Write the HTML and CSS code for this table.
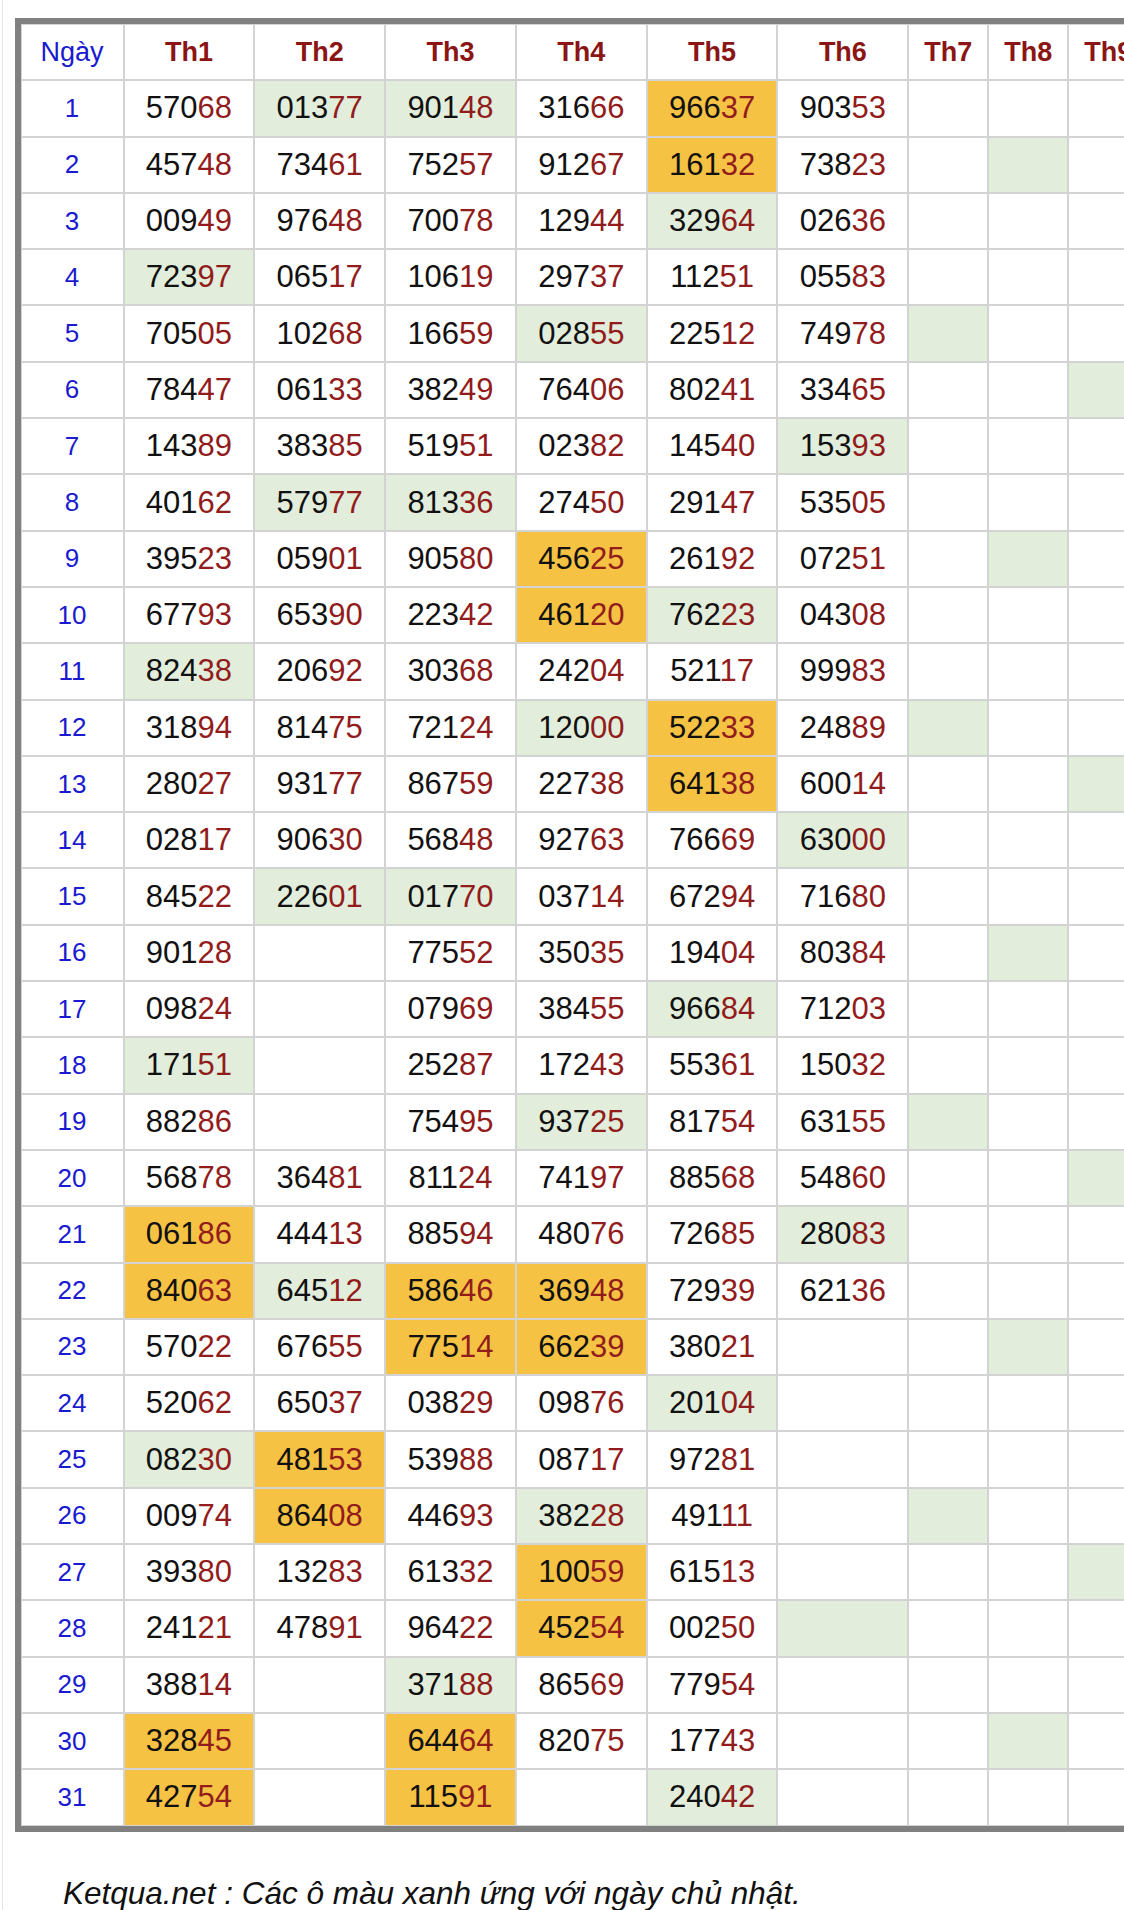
FILE: index.html
```html
<!DOCTYPE html>
<html lang="vi">
<head>
<meta charset="utf-8">
<title>Bảng kết quả theo tháng</title>
<link rel="stylesheet" href="styles.css">
</head>
<body>
<div class="page">
  <div class="scroller">
    <table class="kq">
      <thead>
        <tr>
          <th class="day-col">Ngày</th>
          <th class="m">Th1</th><th class="m">Th2</th><th class="m">Th3</th><th class="m">Th4</th><th class="m">Th5</th><th class="m">Th6</th>
          <th class="s">Th7</th><th class="s">Th8</th><th class="s">Th9</th><th class="s">Th10</th><th class="s">Th11</th><th class="s">Th12</th>
        </tr>
      </thead>
      <tbody>
        <tr><td class="d">1</td><td>570<span class="r">68</span></td><td class="g">013<span class="r">77</span></td><td class="g">901<span class="r">48</span></td><td>316<span class="r">66</span></td><td class="o">966<span class="r">37</span></td><td>903<span class="r">53</span></td><td></td><td></td><td></td><td class="g"></td><td class="g"></td><td></td></tr>
        <tr><td class="d">2</td><td>457<span class="r">48</span></td><td>734<span class="r">61</span></td><td>752<span class="r">57</span></td><td>912<span class="r">67</span></td><td class="o">161<span class="r">32</span></td><td>738<span class="r">23</span></td><td></td><td class="g"></td><td></td><td></td><td></td><td></td></tr>
        <tr><td class="d">3</td><td>009<span class="r">49</span></td><td>976<span class="r">48</span></td><td>700<span class="r">78</span></td><td>129<span class="r">44</span></td><td class="g">329<span class="r">64</span></td><td>026<span class="r">36</span></td><td></td><td></td><td></td><td></td><td></td><td></td></tr>
        <tr><td class="d">4</td><td class="g">723<span class="r">97</span></td><td>065<span class="r">17</span></td><td>106<span class="r">19</span></td><td>297<span class="r">37</span></td><td>112<span class="r">51</span></td><td>055<span class="r">83</span></td><td></td><td></td><td></td><td class="g"></td><td></td><td></td></tr>
        <tr><td class="d">5</td><td>705<span class="r">05</span></td><td>102<span class="r">68</span></td><td>166<span class="r">59</span></td><td class="g">028<span class="r">55</span></td><td>225<span class="r">12</span></td><td>749<span class="r">78</span></td><td class="g"></td><td></td><td></td><td></td><td></td><td></td></tr>
        <tr><td class="d">6</td><td>784<span class="r">47</span></td><td>061<span class="r">33</span></td><td>382<span class="r">49</span></td><td>764<span class="r">06</span></td><td>802<span class="r">41</span></td><td>334<span class="r">65</span></td><td></td><td></td><td class="g"></td><td></td><td></td><td class="g"></td></tr>
        <tr><td class="d">7</td><td>143<span class="r">89</span></td><td>383<span class="r">85</span></td><td>519<span class="r">51</span></td><td>023<span class="r">82</span></td><td>145<span class="r">40</span></td><td class="g">153<span class="r">93</span></td><td></td><td></td><td></td><td></td><td></td><td></td></tr>
        <tr><td class="d">8</td><td>401<span class="r">62</span></td><td class="g">579<span class="r">77</span></td><td class="g">813<span class="r">36</span></td><td>274<span class="r">50</span></td><td>291<span class="r">47</span></td><td>535<span class="r">05</span></td><td></td><td></td><td></td><td></td><td class="g"></td><td></td></tr>
        <tr><td class="d">9</td><td>395<span class="r">23</span></td><td>059<span class="r">01</span></td><td>905<span class="r">80</span></td><td class="o">456<span class="r">25</span></td><td>261<span class="r">92</span></td><td>072<span class="r">51</span></td><td></td><td class="g"></td><td></td><td></td><td></td><td></td></tr>
        <tr><td class="d">10</td><td>677<span class="r">93</span></td><td>653<span class="r">90</span></td><td>223<span class="r">42</span></td><td class="o">461<span class="r">20</span></td><td class="g">762<span class="r">23</span></td><td>043<span class="r">08</span></td><td></td><td></td><td></td><td></td><td></td><td></td></tr>
        <tr><td class="d">11</td><td class="g">824<span class="r">38</span></td><td>206<span class="r">92</span></td><td>303<span class="r">68</span></td><td>242<span class="r">04</span></td><td>521<span class="r">17</span></td><td>999<span class="r">83</span></td><td></td><td></td><td></td><td class="g"></td><td></td><td></td></tr>
        <tr><td class="d">12</td><td>318<span class="r">94</span></td><td>814<span class="r">75</span></td><td>721<span class="r">24</span></td><td class="g">120<span class="r">00</span></td><td class="o">522<span class="r">33</span></td><td>248<span class="r">89</span></td><td class="g"></td><td></td><td></td><td></td><td></td><td></td></tr>
        <tr><td class="d">13</td><td>280<span class="r">27</span></td><td>931<span class="r">77</span></td><td>867<span class="r">59</span></td><td>227<span class="r">38</span></td><td class="o">641<span class="r">38</span></td><td>600<span class="r">14</span></td><td></td><td></td><td class="g"></td><td></td><td></td><td class="g"></td></tr>
        <tr><td class="d">14</td><td>028<span class="r">17</span></td><td>906<span class="r">30</span></td><td>568<span class="r">48</span></td><td>927<span class="r">63</span></td><td>766<span class="r">69</span></td><td class="g">630<span class="r">00</span></td><td></td><td></td><td></td><td></td><td></td><td></td></tr>
        <tr><td class="d">15</td><td>845<span class="r">22</span></td><td class="g">226<span class="r">01</span></td><td class="g">017<span class="r">70</span></td><td>037<span class="r">14</span></td><td>672<span class="r">94</span></td><td>716<span class="r">80</span></td><td></td><td></td><td></td><td></td><td class="g"></td><td></td></tr>
        <tr><td class="d">16</td><td>901<span class="r">28</span></td><td></td><td>775<span class="r">52</span></td><td>350<span class="r">35</span></td><td>194<span class="r">04</span></td><td>803<span class="r">84</span></td><td></td><td class="g"></td><td></td><td></td><td></td><td></td></tr>
        <tr><td class="d">17</td><td>098<span class="r">24</span></td><td></td><td>079<span class="r">69</span></td><td>384<span class="r">55</span></td><td class="g">966<span class="r">84</span></td><td>712<span class="r">03</span></td><td></td><td></td><td></td><td></td><td></td><td></td></tr>
        <tr><td class="d">18</td><td class="g">171<span class="r">51</span></td><td></td><td>252<span class="r">87</span></td><td>172<span class="r">43</span></td><td>553<span class="r">61</span></td><td>150<span class="r">32</span></td><td></td><td></td><td></td><td class="g"></td><td></td><td></td></tr>
        <tr><td class="d">19</td><td>882<span class="r">86</span></td><td></td><td>754<span class="r">95</span></td><td class="g">937<span class="r">25</span></td><td>817<span class="r">54</span></td><td>631<span class="r">55</span></td><td class="g"></td><td></td><td></td><td></td><td></td><td></td></tr>
        <tr><td class="d">20</td><td>568<span class="r">78</span></td><td>364<span class="r">81</span></td><td>811<span class="r">24</span></td><td>741<span class="r">97</span></td><td>885<span class="r">68</span></td><td>548<span class="r">60</span></td><td></td><td></td><td class="g"></td><td></td><td></td><td class="g"></td></tr>
        <tr><td class="d">21</td><td class="o">061<span class="r">86</span></td><td>444<span class="r">13</span></td><td>885<span class="r">94</span></td><td>480<span class="r">76</span></td><td>726<span class="r">85</span></td><td class="g">280<span class="r">83</span></td><td></td><td></td><td></td><td></td><td></td><td></td></tr>
        <tr><td class="d">22</td><td class="o">840<span class="r">63</span></td><td class="g">645<span class="r">12</span></td><td class="o">586<span class="r">46</span></td><td class="o">369<span class="r">48</span></td><td>729<span class="r">39</span></td><td>621<span class="r">36</span></td><td></td><td></td><td></td><td></td><td class="g"></td><td></td></tr>
        <tr><td class="d">23</td><td>570<span class="r">22</span></td><td>676<span class="r">55</span></td><td class="o">775<span class="r">14</span></td><td class="o">662<span class="r">39</span></td><td>380<span class="r">21</span></td><td></td><td></td><td class="g"></td><td></td><td></td><td></td><td></td></tr>
        <tr><td class="d">24</td><td>520<span class="r">62</span></td><td>650<span class="r">37</span></td><td>038<span class="r">29</span></td><td>098<span class="r">76</span></td><td class="g">201<span class="r">04</span></td><td></td><td></td><td></td><td></td><td></td><td></td><td></td></tr>
        <tr><td class="d">25</td><td class="g">082<span class="r">30</span></td><td class="o">481<span class="r">53</span></td><td>539<span class="r">88</span></td><td>087<span class="r">17</span></td><td>972<span class="r">81</span></td><td></td><td></td><td></td><td></td><td class="g"></td><td></td><td></td></tr>
        <tr><td class="d">26</td><td>009<span class="r">74</span></td><td class="o">864<span class="r">08</span></td><td>446<span class="r">93</span></td><td class="g">382<span class="r">28</span></td><td>491<span class="r">11</span></td><td></td><td class="g"></td><td></td><td></td><td></td><td></td><td></td></tr>
        <tr><td class="d">27</td><td>393<span class="r">80</span></td><td>132<span class="r">83</span></td><td>613<span class="r">32</span></td><td class="o">100<span class="r">59</span></td><td>615<span class="r">13</span></td><td></td><td></td><td></td><td class="g"></td><td></td><td></td><td class="g"></td></tr>
        <tr><td class="d">28</td><td>241<span class="r">21</span></td><td>478<span class="r">91</span></td><td>964<span class="r">22</span></td><td class="o">452<span class="r">54</span></td><td>002<span class="r">50</span></td><td class="g"></td><td></td><td></td><td></td><td></td><td></td><td></td></tr>
        <tr><td class="d">29</td><td>388<span class="r">14</span></td><td></td><td class="g">371<span class="r">88</span></td><td>865<span class="r">69</span></td><td>779<span class="r">54</span></td><td></td><td></td><td></td><td></td><td></td><td class="g"></td><td></td></tr>
        <tr><td class="d">30</td><td class="o">328<span class="r">45</span></td><td></td><td class="o">644<span class="r">64</span></td><td>820<span class="r">75</span></td><td>177<span class="r">43</span></td><td></td><td></td><td class="g"></td><td></td><td></td><td></td><td></td></tr>
        <tr><td class="d">31</td><td class="o">427<span class="r">54</span></td><td></td><td class="o">115<span class="r">91</span></td><td></td><td class="g">240<span class="r">42</span></td><td></td><td></td><td></td><td></td><td></td><td></td><td></td></tr>
      </tbody>
    </table>
  </div>
  <p class="note">Ketqua.net : Các ô màu xanh ứng với ngày chủ nhật.</p>
</div>
</body>
</html>
```

FILE: styles.css
```css
html, body {
  margin: 0;
  padding: 0;
  background: #ffffff;
}

body {
  font-family: "Liberation Sans", Arial, "Noto Sans", sans-serif;
  color: #111111;
}

.page {
  margin-left: 2px;
  border-left: 1px solid #e3e3e3;
  min-height: 1910px;
  padding-top: 18px;
  box-sizing: border-box;
  overflow: hidden;
}

.scroller {
  overflow: hidden;
  padding-left: 11.5px;
}

.kq {
  table-layout: fixed;
  width: 1379.8px;
  border: 6px solid #808080;
  border-spacing: 0;
  border-collapse: separate;
}

.kq th,
.kq td {
  box-sizing: border-box;
  height: 56.3px;
  padding: 0;
  border: 1px solid #d3d3d3;
  text-align: center;
  vertical-align: middle;
  white-space: nowrap;
}

.kq th {
  font-size: 27px;
  font-weight: bold;
  color: #8b1515;
}

.kq th.day-col {
  width: 103px;
  font-weight: normal;
  color: #1a1ad0;
}

.kq th.m {
  width: 130.8px;
}

.kq th.s {
  width: 80px;
}

.kq td {
  font-size: 31px;
  color: #111111;
}

.kq td.d {
  font-size: 26px;
  color: #1a1ad0;
}

.kq td.g {
  background: #e2eedb;
}

.kq td.o {
  background: #f5c244;
}

.r {
  color: #921c1c;
}

.note {
  margin: 43.5px 0 0;
  padding-left: 60px;
  font-size: 31.5px;
  font-style: italic;
  color: #111111;
  white-space: nowrap;
}
```
